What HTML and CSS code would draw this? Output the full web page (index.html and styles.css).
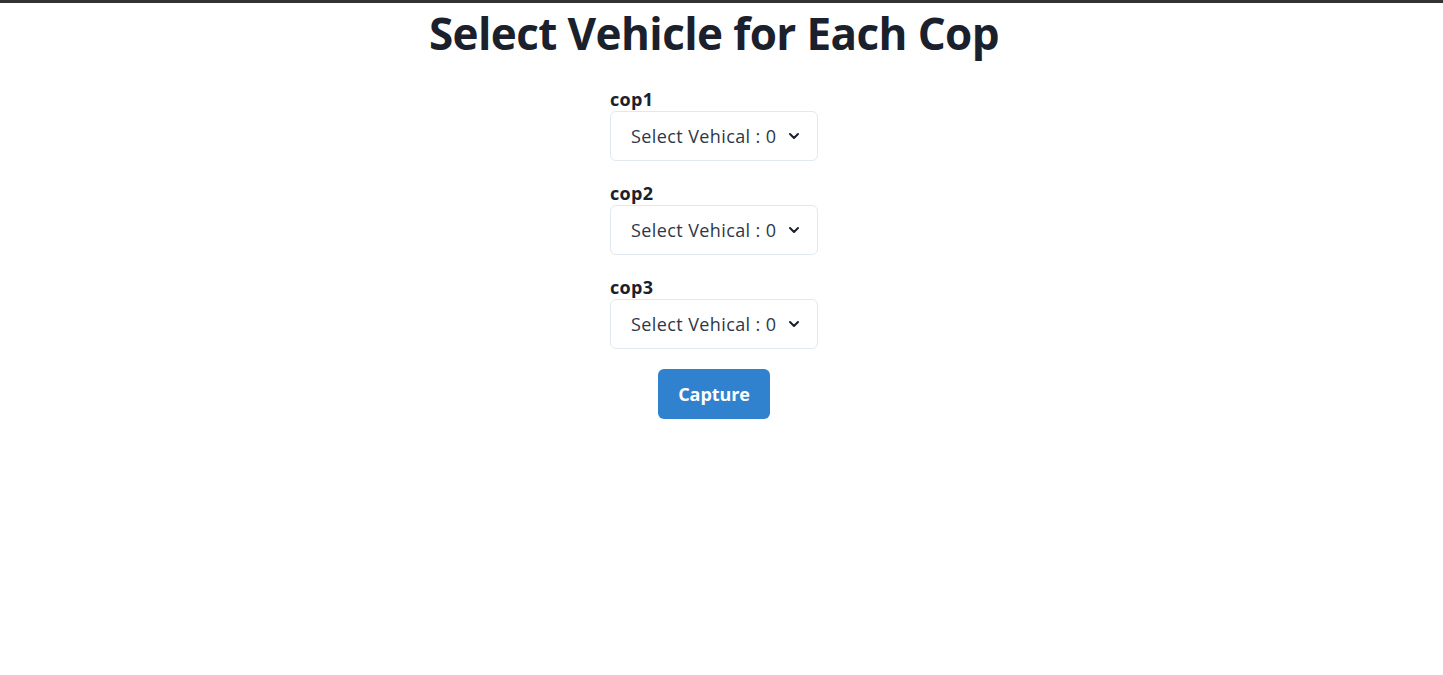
FILE: index.html
```html
<!DOCTYPE html>
<html>
<head>
<meta charset="utf-8">
<link rel="stylesheet" href="styles.css">
</head>
<body>
<div class="page">
  <h1 class="title">Select Vehicle for Each Cop</h1>
  <div class="form">
    <div class="group">
      <label class="label">cop1</label>
      <div class="select-wrap">
        <select class="select"><option>Select Vehical : 0</option></select>
        <svg class="chev" viewBox="0 0 24 24" width="16" height="16"><path d="M6 9l6 6 6-6" fill="none" stroke="#1a202c" stroke-width="3" stroke-linecap="round" stroke-linejoin="round"/></svg>
      </div>
    </div>
    <div class="group">
      <label class="label">cop2</label>
      <div class="select-wrap">
        <select class="select"><option>Select Vehical : 0</option></select>
        <svg class="chev" viewBox="0 0 24 24" width="16" height="16"><path d="M6 9l6 6 6-6" fill="none" stroke="#1a202c" stroke-width="3" stroke-linecap="round" stroke-linejoin="round"/></svg>
      </div>
    </div>
    <div class="group">
      <label class="label">cop3</label>
      <div class="select-wrap">
        <select class="select"><option>Select Vehical : 0</option></select>
        <svg class="chev" viewBox="0 0 24 24" width="16" height="16"><path d="M6 9l6 6 6-6" fill="none" stroke="#1a202c" stroke-width="3" stroke-linecap="round" stroke-linejoin="round"/></svg>
      </div>
    </div>
    <button class="btn">Capture</button>
  </div>
</div>
</body>
</html>
```
FILE: styles.css
```css
html, body {
  margin: 0;
  padding: 0;
  background: #fff;
}
body {
  border-top: 3px solid #333;
  font-family: "Open Sans", "Noto Sans", sans-serif;
  color: #1a202c;
}
.page {
  display: flex;
  flex-direction: column;
  align-items: center;
  margin-right: 15px;
}
.title {
  margin: 0;
  font-size: 44px;
  font-weight: 700;
  line-height: 60px;
  letter-spacing: -0.6px;
}
.form {
  margin-top: 22px;
  width: 208px;
  display: flex;
  flex-direction: column;
  align-items: center;
}
.group {
  width: 100%;
  margin-bottom: 18px;
}
.label {
  display: block;
  padding-top: 3px;
  font-size: 18px;
  font-weight: 700;
  line-height: 23px;
  letter-spacing: 0.3px;
}
.select-wrap {
  position: relative;
  width: 208px;
  height: 50px;
}
.select {
  appearance: none;
  -webkit-appearance: none;
  width: 100%;
  height: 50px;
  box-sizing: border-box;
  border: 1px solid #e2e8f0;
  border-radius: 6px;
  background: #fff;
  padding: 0 30px 0 20px;
  font-family: "Open Sans", "Noto Sans", sans-serif;
  font-size: 18px;
  color: #2d3748;
  letter-spacing: 0.4px;
}
.chev {
  position: absolute;
  right: 16px;
  top: 17px;
  pointer-events: none;
}
.btn {
  margin-top: 2px;
  width: 112px;
  height: 50px;
  border: none;
  border-radius: 6px;
  background: #3182ce;
  color: #fff;
  font-family: "Open Sans", "Noto Sans", sans-serif;
  font-size: 18px;
  font-weight: 700;
  letter-spacing: -0.1px;
  cursor: pointer;
}
```
